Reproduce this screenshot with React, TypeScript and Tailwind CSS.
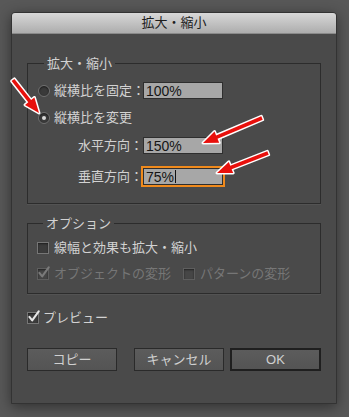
import type { ReactNode } from 'react';

const FONT = '"Liberation Sans", "Noto Sans CJK JP", sans-serif';

function Radio({ checked }: { checked?: boolean }) {
  return (
    <span className="w-[12px] h-[12px] rounded-full border border-[#707070] bg-[#3a3a3a] shadow-[inset_0_1px_2px_rgba(0,0,0,0.6)] flex items-center justify-center shrink-0">
      {checked && <span className="w-[4px] h-[4px] rounded-full bg-[#d8d8d8]" />}
    </span>
  );
}

function Check({ checked, disabled }: { checked?: boolean; disabled?: boolean }) {
  return (
    <span
      className={`w-[12px] h-[12px] border ${
        disabled ? 'border-[#5e5e5e] bg-[#464646]' : 'border-[#767676] bg-[#3c3c3c]'
      } shadow-[inset_0_1px_2px_rgba(0,0,0,0.5)] relative shrink-0`}
    >
      {checked && (
        <svg viewBox="0 0 12 12" className="absolute -left-px -top-[3px] w-[13px] h-[13px]">
          <path
            d="M2.2 6.4 L4.8 9.6 L10.8 1.2"
            fill="none"
            stroke={disabled ? '#7a7a7a' : '#e6e6e6'}
            strokeWidth="1.9"
            strokeLinecap="round"
            strokeLinejoin="round"
          />
        </svg>
      )}
    </span>
  );
}

function Field({ value, focused }: { value: string; focused?: boolean }) {
  return (
    <div
      className={`w-[80px] h-[17px] shrink-0 bg-[#a7a7a7] border border-[#2e2e2e] flex items-center pl-[2px] text-[14px] leading-none text-[#151515] ${
        focused ? 'outline-2 outline-[#f08a1c]' : ''
      }`}
    >
      {value}
      {focused && <span className="w-px h-[13px] bg-[#111] ml-px" />}
    </div>
  );
}

function Group({ title, children, className }: { title: string; children: ReactNode; className?: string }) {
  return (
    <fieldset className={`border border-[#2c2c2c] shadow-[0_1px_0_rgba(255,255,255,0.05)] ${className ?? ''}`}>
      <legend className="ml-[6px] px-[3px] text-[13px] leading-[17px] text-[#d2d2d2]">{title}</legend>
      {children}
    </fieldset>
  );
}

function Button({ label, primary }: { label: string; primary?: boolean }) {
  return (
    <button
      type="button"
      className={`h-[23px] bg-gradient-to-b from-[#5c5c5c] to-[#545454] text-[13px] text-[#d0d0d0] flex items-center justify-center ${
        primary ? 'w-[91px] border-2 border-[#1f1f1f]' : 'w-[90px] border border-[#2a2a2a]'
      }`}
    >
      {label}
    </button>
  );
}

function Arrow({ x1, y1, x2, y2 }: { x1: number; y1: number; x2: number; y2: number }) {
  const dx = x2 - x1;
  const dy = y2 - y1;
  const len = Math.hypot(dx, dy);
  const ux = dx / len;
  const uy = dy / len;
  const nx = -uy;
  const ny = ux;
  const nk = { x: x2 - ux * 15, y: y2 - uy * 15 };
  const p = (x: number, y: number) => `${x.toFixed(1)},${y.toFixed(1)}`;
  const pts = [
    p(x1 + nx * 1.8, y1 + ny * 1.8),
    p(nk.x + nx * 1.8, nk.y + ny * 1.8),
    p(nk.x + nx * 6, nk.y + ny * 6),
    p(x2, y2),
    p(nk.x - nx * 6, nk.y - ny * 6),
    p(nk.x - nx * 1.8, nk.y - ny * 1.8),
    p(x1 - nx * 1.8, y1 - ny * 1.8),
  ].join(' ');
  return (
    <polygon
      points={pts}
      fill="#e8100c"
      stroke="#ffffff"
      strokeWidth="3"
      strokeLinejoin="round"
      paintOrder="stroke"
    />
  );
}

export default function App() {
  return (
    <div className="w-[349px] h-[417px] bg-[#585858] pl-[11px] pt-[12px] relative" style={{ fontFamily: FONT }}>
      <div className="w-[326px] h-[392px] bg-[#4a4a4a] border border-[#333] rounded-t-[4px] shadow-[0_3px_14px_rgba(0,0,0,0.45)] flex flex-col">
        <div className="h-[21px] rounded-t-[3px] bg-gradient-to-b from-[#d8d8d8] to-[#adadad] border-b border-[#8a8a8a] flex items-center justify-center text-[13px] text-[#1e1e1e]">
          拡大・縮小
        </div>

        <div className="px-[15px] pt-[21px] flex flex-col">
          <Group title="拡大・縮小" className="pl-[10px] pt-[10px] pb-[18px]">
            <div className="flex items-center h-[17px]">
              <div className="w-[105px] shrink-0 flex items-center gap-[4px] text-[13px] text-[#d2d2d2] whitespace-nowrap">
                <Radio />
                <span>縦横比を固定：</span>
              </div>
              <Field value="100%" />
            </div>
            <div className="flex items-center h-[17px] mt-[10px] gap-[4px] text-[13px] text-[#d2d2d2] whitespace-nowrap">
              <Radio checked />
              <span>縦横比を変更</span>
            </div>
            <div className="flex items-center h-[17px] mt-[11px]">
              <div className="w-[105px] shrink-0 text-right text-[13px] text-[#d2d2d2] whitespace-nowrap">水平方向：</div>
              <Field value="150%" />
            </div>
            <div className="flex items-center h-[17px] mt-[14px]">
              <div className="w-[105px] shrink-0 text-right text-[13px] text-[#d2d2d2] whitespace-nowrap">垂直方向：</div>
              <Field value="75%" focused />
            </div>
          </Group>

          <Group title="オプション" className="mt-[11px] pl-[9px] pt-[8px] pb-[12px]">
            <div className="flex items-center h-[15px] gap-[5px] text-[13px] text-[#d2d2d2]">
              <Check />
              <span>線幅と効果も拡大・縮小</span>
            </div>
            <div className="flex items-center h-[15px] mt-[11px] text-[13px] text-[#767676]">
              <div className="flex items-center gap-[5px] w-[146px]">
                <Check checked disabled />
                <span>オブジェクトの変形</span>
              </div>
              <div className="flex items-center gap-[5px]">
                <Check disabled />
                <span>パターンの変形</span>
              </div>
            </div>
          </Group>

          <div className="flex items-center h-[15px] mt-[16px] gap-[4px] text-[13px] text-[#d2d2d2]">
            <Check checked />
            <span>プレビュー</span>
          </div>

          <div className="flex items-center mt-[23px]">
            <Button label="コピー" />
            <div className="ml-[17px]">
              <Button label="キャンセル" />
            </div>
            <div className="ml-[6px]">
              <Button label="OK" primary />
            </div>
          </div>
        </div>
      </div>

      <svg className="absolute inset-0 pointer-events-none" width="349" height="417">
        <Arrow x1={13} y1={80} x2={39} y2={113} />
        <Arrow x1={262} y1={118} x2={203} y2={143} />
        <Arrow x1={268} y1={153} x2={217} y2={173} />
      </svg>
    </div>
  );
}
